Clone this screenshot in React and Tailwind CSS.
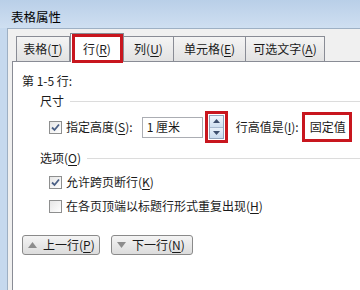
import React from 'react';

const FONT = { fontFamily: '"Noto Sans CJK SC", "Microsoft YaHei", sans-serif' };

const tabs = [
  { label: '表格', key: 'T', width: 'w-[54px]' },
  { label: '行', key: 'R', width: 'w-[54px]', active: true },
  { label: '列', key: 'U', width: 'w-[51px]' },
  { label: '单元格', key: 'E', width: 'w-[73px]' },
  { label: '可选文字', key: 'A', width: 'w-[80px]' },
];

function Hotkey({ label, k }) {
  return (
    <span>
      {label}(<span className="underline underline-offset-2">{k}</span>)
    </span>
  );
}

function Checkbox({ checked }) {
  return (
    <div className="w-[13px] h-[13px] border border-[#8e8f8f] bg-gradient-to-br from-[#e6e6e6] to-white flex items-center justify-center shrink-0">
      {checked && (
        <svg width="11" height="11" viewBox="0 0 11 11">
          <path d="M2 5.5 L4.5 8 L9 2.5" fill="none" stroke="#4a5f85" strokeWidth="1.8" />
        </svg>
      )}
    </div>
  );
}

function Spinner() {
  return (
    <div className="flex flex-col w-[15px] h-[24px] border border-[#8fa3bb]">
      <div className="flex-1 flex items-center justify-center bg-gradient-to-b from-[#f0f6fc] to-[#cfe0f1] border-b border-[#a8bad0]">
        <svg width="7" height="4" viewBox="0 0 7 4"><path d="M0 4 L3.5 0 L7 4 Z" fill="#3d4f6e" /></svg>
      </div>
      <div className="flex-1 flex items-center justify-center bg-gradient-to-b from-[#e8f1fa] to-[#c9dbee]">
        <svg width="7" height="4" viewBox="0 0 7 4"><path d="M0 0 L3.5 4 L7 0 Z" fill="#3d4f6e" /></svg>
      </div>
    </div>
  );
}

function NavButton({ up, label, k, width }) {
  return (
    <div className={`${width} h-[20px] rounded-[3px] border border-[#8a8a8a] bg-gradient-to-b from-[#f4f4f4] to-[#dcdcdc] flex items-center pl-[5px] gap-[6px]`}>
      <svg width="9" height="6" viewBox="0 0 9 6">
        <path d={up ? 'M0 6 L4.5 0 L9 6 Z' : 'M0 0 L4.5 6 L9 0 Z'} fill="#8c8c8c" />
      </svg>
      <Hotkey label={label} k={k} />
    </div>
  );
}

export default function App() {
  return (
    <div className="w-[360px] h-[290px] overflow-hidden bg-[#c6d9ee] flex flex-col text-[12px] leading-[16px] text-[#1a1a1a]" style={FONT}>
      {/* Title bar */}
      <div className="h-[28px] pl-[11px] pt-[9px] bg-gradient-to-b from-[#b9cfe8] to-[#cfdff1] text-[12.5px] text-black shrink-0">
        表格属性
      </div>

      <div className="flex-1 flex pl-[7px]">
        <div className="flex-1 flex flex-col bg-[#f0f0f0] border-l border-t border-[#9eb0c4] pl-[4px] pt-[4px]">
          {/* Tabs */}
          <div className="flex items-end pl-[4px] shrink-0">
            {tabs.map((t) =>
              t.active ? (
                <div key={t.key} className={`${t.width} h-[29px] relative z-10 -mb-px bg-white border border-b-0 border-[#898c95] flex items-center justify-center pt-[1px]`}>
                  <Hotkey label={t.label} k={t.key} />
                  <span className="absolute left-[1px] right-0 top-0 -bottom-[1px] border-[3px] border-[#c8161e]" />
                </div>
              ) : (
                <div key={t.key} className={`${t.width} h-[25px] -ml-px first:ml-0 bg-gradient-to-b from-[#f4f4f4] to-[#e2e2e2] border border-b-0 border-[#898c95] flex items-center justify-center`}>
                  <Hotkey label={t.label} k={t.key} />
                </div>
              )
            )}
          </div>

          {/* Panel */}
          <div className="flex-1 bg-white border-l border-t border-[#898c95] pl-[9px] pt-[11px]">
            <div>第 1-5 行:</div>

            <div className="mt-[4px] pl-[18px] flex items-center">
              <span>尺寸</span>
              <div className="flex-1 ml-[6px] border-t border-[#dcdcdc]" />
            </div>

            <div className="mt-[2px] pl-[27px] h-[32px] flex items-center">
              <Checkbox checked />
              <span className="ml-[4px]"><Hotkey label="指定高度" k="S" />:</span>
              <div className="ml-[9px] w-[61px] h-[21px] border border-[#abadb3] flex items-center pl-[4px] bg-white">
                1 厘米
              </div>
              <div className="ml-[2px] border-[3px] border-[#c8161e] px-px py-px">
                <Spinner />
              </div>
              <span className="ml-[8px]"><Hotkey label="行高值是" k="I" />:</span>
              <div className="ml-[3px] w-[50px] h-[30px] border-[3px] border-[#c8161e] bg-white flex items-center pl-[5px]">
                固定值
              </div>
            </div>

            <div className="mt-[7px] pl-[18px] flex items-center">
              <Hotkey label="选项" k="O" />
              <div className="flex-1 ml-[6px] border-t border-[#dcdcdc]" />
            </div>

            <div className="mt-[8px] pl-[27px] flex items-center">
              <Checkbox checked />
              <span className="ml-[4px]"><Hotkey label="允许跨页断行" k="K" /></span>
            </div>

            <div className="mt-[8px] pl-[27px] flex items-center">
              <Checkbox />
              <span className="ml-[4px]"><Hotkey label="在各页顶端以标题行形式重复出现" k="H" /></span>
            </div>

            <div className="mt-[21px] flex gap-[11px]">
              <NavButton up label="上一行" k="P" width="w-[78px]" />
              <NavButton label="下一行" k="N" width="w-[82px]" />
            </div>
          </div>
        </div>
      </div>
    </div>
  );
}
